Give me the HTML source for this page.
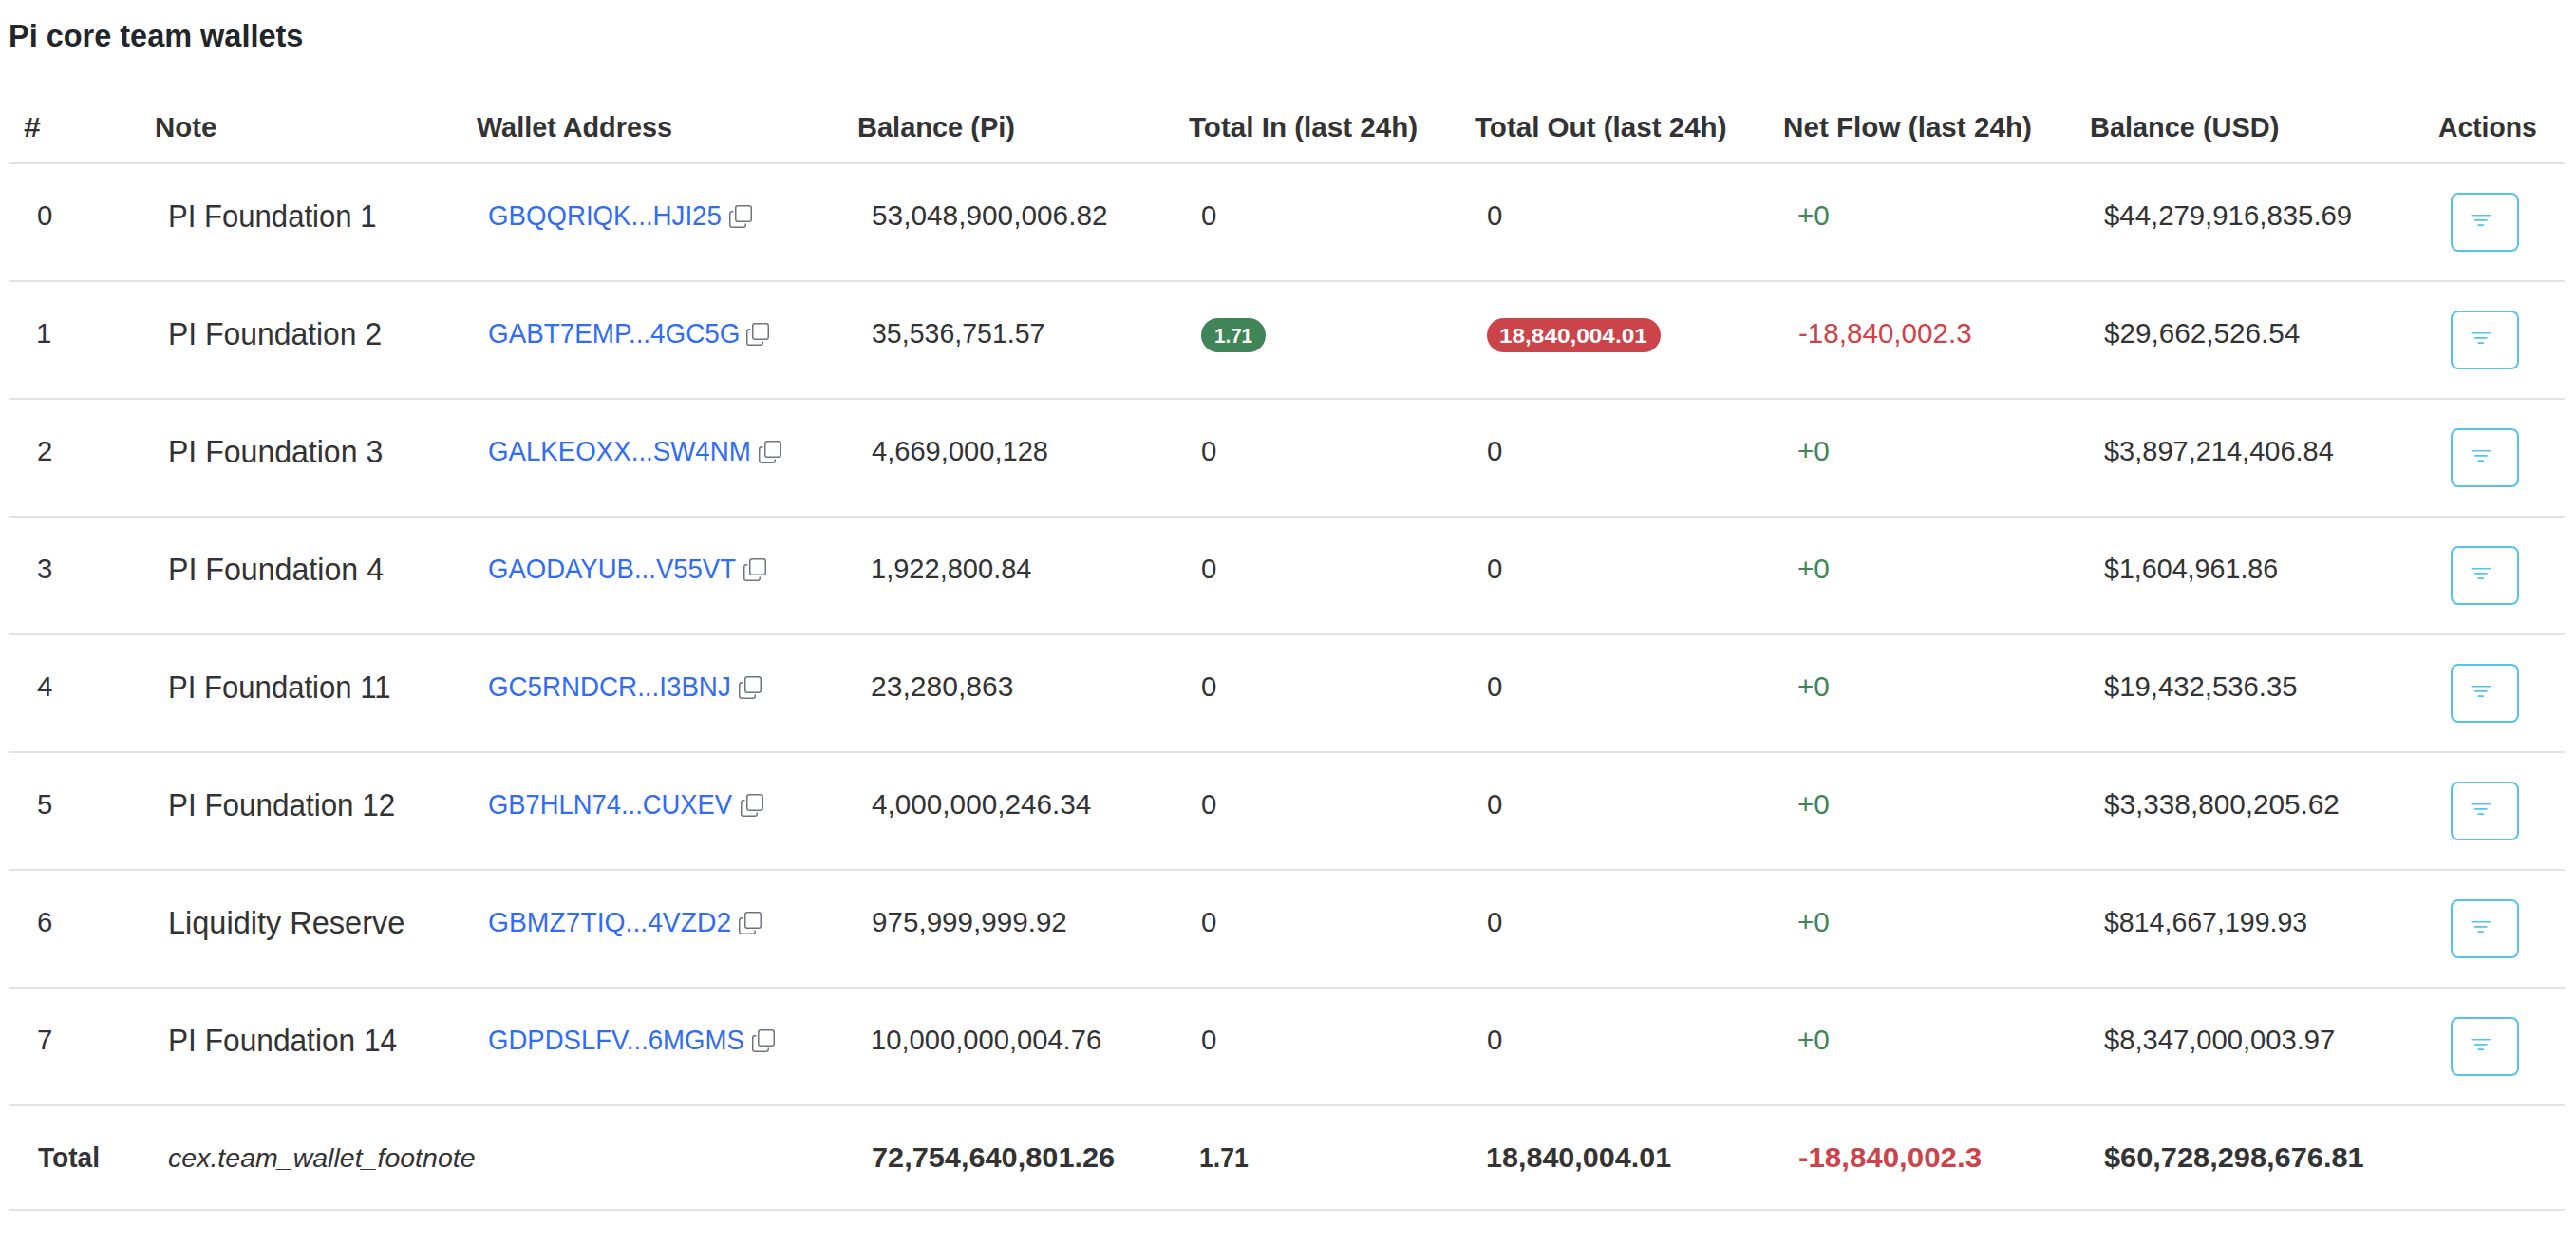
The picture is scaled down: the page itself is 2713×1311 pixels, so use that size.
<!DOCTYPE html>
<html><head><meta charset="utf-8"><title>Pi core team wallets</title>
<style>
html,body{margin:0;padding:0;background:#fff;width:2713px;height:1311px;overflow:hidden;position:relative}
.t{position:absolute;white-space:nowrap;font-family:"Liberation Sans",sans-serif;transform-origin:0 0}
.ln{position:absolute;left:9px;width:2692px;height:2px;background:#dfe2e6}
.ic{position:absolute;width:24px;height:24px}
.btn{position:absolute;left:2581px;width:68px;height:58px;border:2px solid #55c4ea;border-radius:8px;background:#fff}
.fi{position:absolute;left:16.4px;top:14.3px;width:27.6px;height:27.6px}
.bdg{position:absolute;top:335px;height:36px;border-radius:18px}
</style></head><body>

<div class="ln" style="top:171px"></div>
<div class="ln" style="top:295px"></div>
<div class="ln" style="top:419px"></div>
<div class="ln" style="top:543px"></div>
<div class="ln" style="top:667px"></div>
<div class="ln" style="top:791px"></div>
<div class="ln" style="top:915px"></div>
<div class="ln" style="top:1039px"></div>
<div class="ln" style="top:1163px"></div>
<div class="ln" style="top:1273px"></div>
<div class="bdg" style="left:1265px;width:68px;background:#408558"></div>
<div class="bdg" style="left:1566px;width:183px;background:#cb444a"></div>
<div class="t" style="left:9.03px;top:22.20px;font-size:32.9px;line-height:32.9px;color:#222529;font-weight:bold;transform:scaleX(0.9871)">Pi core team wallets</div>
<div class="t" style="left:24.57px;top:119.83px;font-size:28.6px;line-height:28.6px;color:#333333;font-weight:bold;transform:scaleX(1.1267)">#</div>
<div class="t" style="left:163.44px;top:119.83px;font-size:28.6px;line-height:28.6px;color:#333333;font-weight:bold;transform:scaleX(1.0279)">Note</div>
<div class="t" style="left:502.10px;top:119.83px;font-size:28.6px;line-height:28.6px;color:#333333;font-weight:bold;transform:scaleX(1.0074)">Wallet Address</div>
<div class="t" style="left:903.37px;top:119.83px;font-size:28.6px;line-height:28.6px;color:#333333;font-weight:bold;transform:scaleX(1.0144)">Balance (Pi)</div>
<div class="t" style="left:1251.60px;top:119.83px;font-size:28.6px;line-height:28.6px;color:#333333;font-weight:bold;transform:scaleX(1.0345)">Total In (last 24h)</div>
<div class="t" style="left:1553.00px;top:119.83px;font-size:28.6px;line-height:28.6px;color:#333333;font-weight:bold;transform:scaleX(1.0337)">Total Out (last 24h)</div>
<div class="t" style="left:1878.33px;top:119.83px;font-size:28.6px;line-height:28.6px;color:#333333;font-weight:bold;transform:scaleX(1.0369)">Net Flow (last 24h)</div>
<div class="t" style="left:2200.68px;top:119.83px;font-size:28.6px;line-height:28.6px;color:#333333;font-weight:bold;transform:scaleX(1.0113)">Balance (USD)</div>
<div class="t" style="left:2567.71px;top:119.83px;font-size:28.6px;line-height:28.6px;color:#333333;font-weight:bold;transform:scaleX(0.9893)">Actions</div>
<div class="t" style="left:39.10px;top:211.66px;font-size:29.4px;line-height:29.4px;color:#333333">0</div>
<div class="t" style="left:177.00px;top:212.20px;font-size:32.6px;line-height:32.6px;color:#333333;transform:scaleX(0.9542)">PI Foundation 1</div>
<div class="t" style="left:514.34px;top:211.62px;font-size:29.8px;line-height:29.8px;color:#316cf4;transform:scaleX(0.9279)">GBQQRIQK...HJI25</div>
<div class="t" style="left:918.29px;top:211.66px;font-size:29.4px;line-height:29.4px;color:#333333;transform:scaleX(1.0140)">53,048,900,006.82</div>
<div class="t" style="left:1265.00px;top:211.66px;font-size:29.4px;line-height:29.4px;color:#333333">0</div>
<div class="t" style="left:1566.00px;top:211.66px;font-size:29.4px;line-height:29.4px;color:#333333">0</div>
<div class="t" style="left:1893.29px;top:211.66px;font-size:29.4px;line-height:29.4px;color:#408558;transform:scaleX(1.0094)">+0</div>
<div class="t" style="left:2215.90px;top:211.66px;font-size:29.4px;line-height:29.4px;color:#333333;transform:scaleX(0.9988)">$44,279,916,835.69</div>
<div class="t" style="left:38.10px;top:335.66px;font-size:29.4px;line-height:29.4px;color:#333333">1</div>
<div class="t" style="left:176.92px;top:336.20px;font-size:32.6px;line-height:32.6px;color:#333333;transform:scaleX(0.9789)">PI Foundation 2</div>
<div class="t" style="left:514.33px;top:335.62px;font-size:29.8px;line-height:29.8px;color:#316cf4;transform:scaleX(0.9336)">GABT7EMP...4GC5G</div>
<div class="t" style="left:918.33px;top:335.66px;font-size:29.4px;line-height:29.4px;color:#333333;transform:scaleX(0.9708)">35,536,751.57</div>
<div class="t" style="left:1893.89px;top:335.66px;font-size:29.4px;line-height:29.4px;color:#cb444a;transform:scaleX(1.0067)">-18,840,002.3</div>
<div class="t" style="left:2215.89px;top:335.66px;font-size:29.4px;line-height:29.4px;color:#333333;transform:scaleX(1.0094)">$29,662,526.54</div>
<div class="t" style="left:39.10px;top:459.66px;font-size:29.4px;line-height:29.4px;color:#333333">2</div>
<div class="t" style="left:176.91px;top:460.20px;font-size:32.6px;line-height:32.6px;color:#333333;transform:scaleX(0.9834)">PI Foundation 3</div>
<div class="t" style="left:514.34px;top:459.62px;font-size:29.8px;line-height:29.8px;color:#316cf4;transform:scaleX(0.9286)">GALKEOXX...SW4NM</div>
<div class="t" style="left:918.31px;top:459.66px;font-size:29.4px;line-height:29.4px;color:#333333;transform:scaleX(0.9898)">4,669,000,128</div>
<div class="t" style="left:1265.00px;top:459.66px;font-size:29.4px;line-height:29.4px;color:#333333">0</div>
<div class="t" style="left:1566.00px;top:459.66px;font-size:29.4px;line-height:29.4px;color:#333333">0</div>
<div class="t" style="left:1893.29px;top:459.66px;font-size:29.4px;line-height:29.4px;color:#408558;transform:scaleX(1.0094)">+0</div>
<div class="t" style="left:2215.91px;top:459.66px;font-size:29.4px;line-height:29.4px;color:#333333;transform:scaleX(0.9864)">$3,897,214,406.84</div>
<div class="t" style="left:39.10px;top:583.66px;font-size:29.4px;line-height:29.4px;color:#333333">3</div>
<div class="t" style="left:176.90px;top:584.20px;font-size:32.6px;line-height:32.6px;color:#333333;transform:scaleX(0.9869)">PI Foundation 4</div>
<div class="t" style="left:514.35px;top:583.62px;font-size:29.8px;line-height:29.8px;color:#316cf4;transform:scaleX(0.9236)">GAODAYUB...V55VT</div>
<div class="t" style="left:917.32px;top:583.66px;font-size:29.4px;line-height:29.4px;color:#333333;transform:scaleX(0.9876)">1,922,800.84</div>
<div class="t" style="left:1265.00px;top:583.66px;font-size:29.4px;line-height:29.4px;color:#333333">0</div>
<div class="t" style="left:1566.00px;top:583.66px;font-size:29.4px;line-height:29.4px;color:#333333">0</div>
<div class="t" style="left:1893.29px;top:583.66px;font-size:29.4px;line-height:29.4px;color:#408558;transform:scaleX(1.0094)">+0</div>
<div class="t" style="left:2215.93px;top:583.66px;font-size:29.4px;line-height:29.4px;color:#333333;transform:scaleX(0.9747)">$1,604,961.86</div>
<div class="t" style="left:39.10px;top:707.66px;font-size:29.4px;line-height:29.4px;color:#333333">4</div>
<div class="t" style="left:177.00px;top:708.20px;font-size:32.6px;line-height:32.6px;color:#333333;transform:scaleX(0.9545)">PI Foundation 11</div>
<div class="t" style="left:514.34px;top:707.62px;font-size:29.8px;line-height:29.8px;color:#316cf4;transform:scaleX(0.9306)">GC5RNDCR...I3BNJ</div>
<div class="t" style="left:917.25px;top:707.66px;font-size:29.4px;line-height:29.4px;color:#333333;transform:scaleX(1.0229)">23,280,863</div>
<div class="t" style="left:1265.00px;top:707.66px;font-size:29.4px;line-height:29.4px;color:#333333">0</div>
<div class="t" style="left:1566.00px;top:707.66px;font-size:29.4px;line-height:29.4px;color:#333333">0</div>
<div class="t" style="left:1893.29px;top:707.66px;font-size:29.4px;line-height:29.4px;color:#408558;transform:scaleX(1.0094)">+0</div>
<div class="t" style="left:2215.90px;top:707.66px;font-size:29.4px;line-height:29.4px;color:#333333;transform:scaleX(0.9965)">$19,432,536.35</div>
<div class="t" style="left:39.10px;top:831.66px;font-size:29.4px;line-height:29.4px;color:#333333">5</div>
<div class="t" style="left:176.97px;top:832.20px;font-size:32.6px;line-height:32.6px;color:#333333;transform:scaleX(0.9641)">PI Foundation 12</div>
<div class="t" style="left:514.36px;top:831.62px;font-size:29.8px;line-height:29.8px;color:#316cf4;transform:scaleX(0.9183)">GB7HLN74...CUXEV</div>
<div class="t" style="left:918.29px;top:831.66px;font-size:29.4px;line-height:29.4px;color:#333333;transform:scaleX(1.0110)">4,000,000,246.34</div>
<div class="t" style="left:1265.00px;top:831.66px;font-size:29.4px;line-height:29.4px;color:#333333">0</div>
<div class="t" style="left:1566.00px;top:831.66px;font-size:29.4px;line-height:29.4px;color:#333333">0</div>
<div class="t" style="left:1893.29px;top:831.66px;font-size:29.4px;line-height:29.4px;color:#408558;transform:scaleX(1.0094)">+0</div>
<div class="t" style="left:2215.89px;top:831.66px;font-size:29.4px;line-height:29.4px;color:#333333;transform:scaleX(1.0111)">$3,338,800,205.62</div>
<div class="t" style="left:39.10px;top:955.66px;font-size:29.4px;line-height:29.4px;color:#333333">6</div>
<div class="t" style="left:176.87px;top:956.20px;font-size:32.6px;line-height:32.6px;color:#333333;transform:scaleX(0.9977)">Liquidity Reserve</div>
<div class="t" style="left:514.30px;top:955.62px;font-size:29.8px;line-height:29.8px;color:#316cf4;transform:scaleX(0.9492)">GBMZ7TIQ...4VZD2</div>
<div class="t" style="left:918.29px;top:955.66px;font-size:29.4px;line-height:29.4px;color:#333333;transform:scaleX(1.0074)">975,999,999.92</div>
<div class="t" style="left:1265.00px;top:955.66px;font-size:29.4px;line-height:29.4px;color:#333333">0</div>
<div class="t" style="left:1566.00px;top:955.66px;font-size:29.4px;line-height:29.4px;color:#333333">0</div>
<div class="t" style="left:1893.29px;top:955.66px;font-size:29.4px;line-height:29.4px;color:#408558;transform:scaleX(1.0094)">+0</div>
<div class="t" style="left:2215.93px;top:955.66px;font-size:29.4px;line-height:29.4px;color:#333333;transform:scaleX(0.9706)">$814,667,199.93</div>
<div class="t" style="left:39.10px;top:1079.66px;font-size:29.4px;line-height:29.4px;color:#333333">7</div>
<div class="t" style="left:176.94px;top:1080.20px;font-size:32.6px;line-height:32.6px;color:#333333;transform:scaleX(0.9719)">PI Foundation 14</div>
<div class="t" style="left:514.35px;top:1079.62px;font-size:29.8px;line-height:29.8px;color:#316cf4;transform:scaleX(0.9239)">GDPDSLFV...6MGMS</div>
<div class="t" style="left:917.32px;top:1079.66px;font-size:29.4px;line-height:29.4px;color:#333333;transform:scaleX(0.9917)">10,000,000,004.76</div>
<div class="t" style="left:1265.00px;top:1079.66px;font-size:29.4px;line-height:29.4px;color:#333333">0</div>
<div class="t" style="left:1566.00px;top:1079.66px;font-size:29.4px;line-height:29.4px;color:#333333">0</div>
<div class="t" style="left:1893.29px;top:1079.66px;font-size:29.4px;line-height:29.4px;color:#408558;transform:scaleX(1.0094)">+0</div>
<div class="t" style="left:2215.91px;top:1079.66px;font-size:29.4px;line-height:29.4px;color:#333333;transform:scaleX(0.9922)">$8,347,000,003.97</div>
<div class="t" style="left:1278.64px;top:344.22px;font-size:21.4px;line-height:21.4px;color:#ffffff;font-weight:bold;transform:scaleX(0.9600)">1.71</div>
<div class="t" style="left:1579.46px;top:344.22px;font-size:21.4px;line-height:21.4px;color:#ffffff;font-weight:bold;transform:scaleX(1.1385)">18,840,004.01</div>
<div class="t" style="left:40.00px;top:1204.59px;font-size:29.0px;line-height:29.0px;color:#333333;font-weight:bold;transform:scaleX(0.9692)">Total</div>
<div class="t" style="left:177.27px;top:1205.61px;font-size:27.8px;line-height:27.8px;color:#333333;font-style:italic;transform:scaleX(1.0265)">cex.team_wallet_footnote</div>
<div class="t" style="left:918.06px;top:1204.26px;font-size:29.4px;line-height:29.4px;color:#333333;font-weight:bold;transform:scaleX(1.0449)">72,754,640,801.26</div>
<div class="t" style="left:1263.39px;top:1204.26px;font-size:29.4px;line-height:29.4px;color:#333333;font-weight:bold;transform:scaleX(0.9074)">1.71</div>
<div class="t" style="left:1564.82px;top:1204.26px;font-size:29.4px;line-height:29.4px;color:#333333;font-weight:bold;transform:scaleX(1.0384)">18,840,004.01</div>
<div class="t" style="left:1894.24px;top:1204.26px;font-size:29.4px;line-height:29.4px;color:#cb444a;font-weight:bold;transform:scaleX(1.0642)">-18,840,002.3</div>
<div class="t" style="left:2215.65px;top:1204.26px;font-size:29.4px;line-height:29.4px;color:#333333;font-weight:bold;transform:scaleX(1.0465)">$60,728,298,676.81</div>
<svg class="ic" style="left:768.4px;top:216.1px" viewBox="0 0 16 16" fill="#6e757c"><path d="M4 2a2 2 0 0 1 2-2h8a2 2 0 0 1 2 2v8a2 2 0 0 1-2 2H6a2 2 0 0 1-2-2zm2-1a1 1 0 0 0-1 1v8a1 1 0 0 0 1 1h8a1 1 0 0 0 1-1V2a1 1 0 0 0-1-1zM2 5a1 1 0 0 0-1 1v8a1 1 0 0 0 1 1h8a1 1 0 0 0 1-1v-1h1v1a2 2 0 0 1-2 2H2a2 2 0 0 1-2-2V6a2 2 0 0 1 2-2h1v1z"/></svg>
<svg class="ic" style="left:786.4px;top:340.1px" viewBox="0 0 16 16" fill="#6e757c"><path d="M4 2a2 2 0 0 1 2-2h8a2 2 0 0 1 2 2v8a2 2 0 0 1-2 2H6a2 2 0 0 1-2-2zm2-1a1 1 0 0 0-1 1v8a1 1 0 0 0 1 1h8a1 1 0 0 0 1-1V2a1 1 0 0 0-1-1zM2 5a1 1 0 0 0-1 1v8a1 1 0 0 0 1 1h8a1 1 0 0 0 1-1v-1h1v1a2 2 0 0 1-2 2H2a2 2 0 0 1-2-2V6a2 2 0 0 1 2-2h1v1z"/></svg>
<svg class="ic" style="left:798.8px;top:464.1px" viewBox="0 0 16 16" fill="#6e757c"><path d="M4 2a2 2 0 0 1 2-2h8a2 2 0 0 1 2 2v8a2 2 0 0 1-2 2H6a2 2 0 0 1-2-2zm2-1a1 1 0 0 0-1 1v8a1 1 0 0 0 1 1h8a1 1 0 0 0 1-1V2a1 1 0 0 0-1-1zM2 5a1 1 0 0 0-1 1v8a1 1 0 0 0 1 1h8a1 1 0 0 0 1-1v-1h1v1a2 2 0 0 1-2 2H2a2 2 0 0 1-2-2V6a2 2 0 0 1 2-2h1v1z"/></svg>
<svg class="ic" style="left:783.3px;top:588.1px" viewBox="0 0 16 16" fill="#6e757c"><path d="M4 2a2 2 0 0 1 2-2h8a2 2 0 0 1 2 2v8a2 2 0 0 1-2 2H6a2 2 0 0 1-2-2zm2-1a1 1 0 0 0-1 1v8a1 1 0 0 0 1 1h8a1 1 0 0 0 1-1V2a1 1 0 0 0-1-1zM2 5a1 1 0 0 0-1 1v8a1 1 0 0 0 1 1h8a1 1 0 0 0 1-1v-1h1v1a2 2 0 0 1-2 2H2a2 2 0 0 1-2-2V6a2 2 0 0 1 2-2h1v1z"/></svg>
<svg class="ic" style="left:777.7px;top:712.1px" viewBox="0 0 16 16" fill="#6e757c"><path d="M4 2a2 2 0 0 1 2-2h8a2 2 0 0 1 2 2v8a2 2 0 0 1-2 2H6a2 2 0 0 1-2-2zm2-1a1 1 0 0 0-1 1v8a1 1 0 0 0 1 1h8a1 1 0 0 0 1-1V2a1 1 0 0 0-1-1zM2 5a1 1 0 0 0-1 1v8a1 1 0 0 0 1 1h8a1 1 0 0 0 1-1v-1h1v1a2 2 0 0 1-2 2H2a2 2 0 0 1-2-2V6a2 2 0 0 1 2-2h1v1z"/></svg>
<svg class="ic" style="left:780.1px;top:836.1px" viewBox="0 0 16 16" fill="#6e757c"><path d="M4 2a2 2 0 0 1 2-2h8a2 2 0 0 1 2 2v8a2 2 0 0 1-2 2H6a2 2 0 0 1-2-2zm2-1a1 1 0 0 0-1 1v8a1 1 0 0 0 1 1h8a1 1 0 0 0 1-1V2a1 1 0 0 0-1-1zM2 5a1 1 0 0 0-1 1v8a1 1 0 0 0 1 1h8a1 1 0 0 0 1-1v-1h1v1a2 2 0 0 1-2 2H2a2 2 0 0 1-2-2V6a2 2 0 0 1 2-2h1v1z"/></svg>
<svg class="ic" style="left:778.0px;top:960.1px" viewBox="0 0 16 16" fill="#6e757c"><path d="M4 2a2 2 0 0 1 2-2h8a2 2 0 0 1 2 2v8a2 2 0 0 1-2 2H6a2 2 0 0 1-2-2zm2-1a1 1 0 0 0-1 1v8a1 1 0 0 0 1 1h8a1 1 0 0 0 1-1V2a1 1 0 0 0-1-1zM2 5a1 1 0 0 0-1 1v8a1 1 0 0 0 1 1h8a1 1 0 0 0 1-1v-1h1v1a2 2 0 0 1-2 2H2a2 2 0 0 1-2-2V6a2 2 0 0 1 2-2h1v1z"/></svg>
<svg class="ic" style="left:792.3px;top:1084.1px" viewBox="0 0 16 16" fill="#6e757c"><path d="M4 2a2 2 0 0 1 2-2h8a2 2 0 0 1 2 2v8a2 2 0 0 1-2 2H6a2 2 0 0 1-2-2zm2-1a1 1 0 0 0-1 1v8a1 1 0 0 0 1 1h8a1 1 0 0 0 1-1V2a1 1 0 0 0-1-1zM2 5a1 1 0 0 0-1 1v8a1 1 0 0 0 1 1h8a1 1 0 0 0 1-1v-1h1v1a2 2 0 0 1-2 2H2a2 2 0 0 1-2-2V6a2 2 0 0 1 2-2h1v1z"/></svg>
<div class="btn" style="top:203px"><svg class="fi" viewBox="0 0 16 16" fill="#55c4ea"><path d="M6 10.5a.5.5 0 0 1 .5-.5h3a.5.5 0 0 1 0 1h-3a.5.5 0 0 1-.5-.5m-2-3a.5.5 0 0 1 .5-.5h7a.5.5 0 0 1 0 1h-7a.5.5 0 0 1-.5-.5m-2-3a.5.5 0 0 1 .5-.5h11a.5.5 0 0 1 0 1h-11a.5.5 0 0 1-.5-.5"/></svg></div>
<div class="btn" style="top:327px"><svg class="fi" viewBox="0 0 16 16" fill="#55c4ea"><path d="M6 10.5a.5.5 0 0 1 .5-.5h3a.5.5 0 0 1 0 1h-3a.5.5 0 0 1-.5-.5m-2-3a.5.5 0 0 1 .5-.5h7a.5.5 0 0 1 0 1h-7a.5.5 0 0 1-.5-.5m-2-3a.5.5 0 0 1 .5-.5h11a.5.5 0 0 1 0 1h-11a.5.5 0 0 1-.5-.5"/></svg></div>
<div class="btn" style="top:451px"><svg class="fi" viewBox="0 0 16 16" fill="#55c4ea"><path d="M6 10.5a.5.5 0 0 1 .5-.5h3a.5.5 0 0 1 0 1h-3a.5.5 0 0 1-.5-.5m-2-3a.5.5 0 0 1 .5-.5h7a.5.5 0 0 1 0 1h-7a.5.5 0 0 1-.5-.5m-2-3a.5.5 0 0 1 .5-.5h11a.5.5 0 0 1 0 1h-11a.5.5 0 0 1-.5-.5"/></svg></div>
<div class="btn" style="top:575px"><svg class="fi" viewBox="0 0 16 16" fill="#55c4ea"><path d="M6 10.5a.5.5 0 0 1 .5-.5h3a.5.5 0 0 1 0 1h-3a.5.5 0 0 1-.5-.5m-2-3a.5.5 0 0 1 .5-.5h7a.5.5 0 0 1 0 1h-7a.5.5 0 0 1-.5-.5m-2-3a.5.5 0 0 1 .5-.5h11a.5.5 0 0 1 0 1h-11a.5.5 0 0 1-.5-.5"/></svg></div>
<div class="btn" style="top:699px"><svg class="fi" viewBox="0 0 16 16" fill="#55c4ea"><path d="M6 10.5a.5.5 0 0 1 .5-.5h3a.5.5 0 0 1 0 1h-3a.5.5 0 0 1-.5-.5m-2-3a.5.5 0 0 1 .5-.5h7a.5.5 0 0 1 0 1h-7a.5.5 0 0 1-.5-.5m-2-3a.5.5 0 0 1 .5-.5h11a.5.5 0 0 1 0 1h-11a.5.5 0 0 1-.5-.5"/></svg></div>
<div class="btn" style="top:823px"><svg class="fi" viewBox="0 0 16 16" fill="#55c4ea"><path d="M6 10.5a.5.5 0 0 1 .5-.5h3a.5.5 0 0 1 0 1h-3a.5.5 0 0 1-.5-.5m-2-3a.5.5 0 0 1 .5-.5h7a.5.5 0 0 1 0 1h-7a.5.5 0 0 1-.5-.5m-2-3a.5.5 0 0 1 .5-.5h11a.5.5 0 0 1 0 1h-11a.5.5 0 0 1-.5-.5"/></svg></div>
<div class="btn" style="top:947px"><svg class="fi" viewBox="0 0 16 16" fill="#55c4ea"><path d="M6 10.5a.5.5 0 0 1 .5-.5h3a.5.5 0 0 1 0 1h-3a.5.5 0 0 1-.5-.5m-2-3a.5.5 0 0 1 .5-.5h7a.5.5 0 0 1 0 1h-7a.5.5 0 0 1-.5-.5m-2-3a.5.5 0 0 1 .5-.5h11a.5.5 0 0 1 0 1h-11a.5.5 0 0 1-.5-.5"/></svg></div>
<div class="btn" style="top:1071px"><svg class="fi" viewBox="0 0 16 16" fill="#55c4ea"><path d="M6 10.5a.5.5 0 0 1 .5-.5h3a.5.5 0 0 1 0 1h-3a.5.5 0 0 1-.5-.5m-2-3a.5.5 0 0 1 .5-.5h7a.5.5 0 0 1 0 1h-7a.5.5 0 0 1-.5-.5m-2-3a.5.5 0 0 1 .5-.5h11a.5.5 0 0 1 0 1h-11a.5.5 0 0 1-.5-.5"/></svg></div>
</body></html>
